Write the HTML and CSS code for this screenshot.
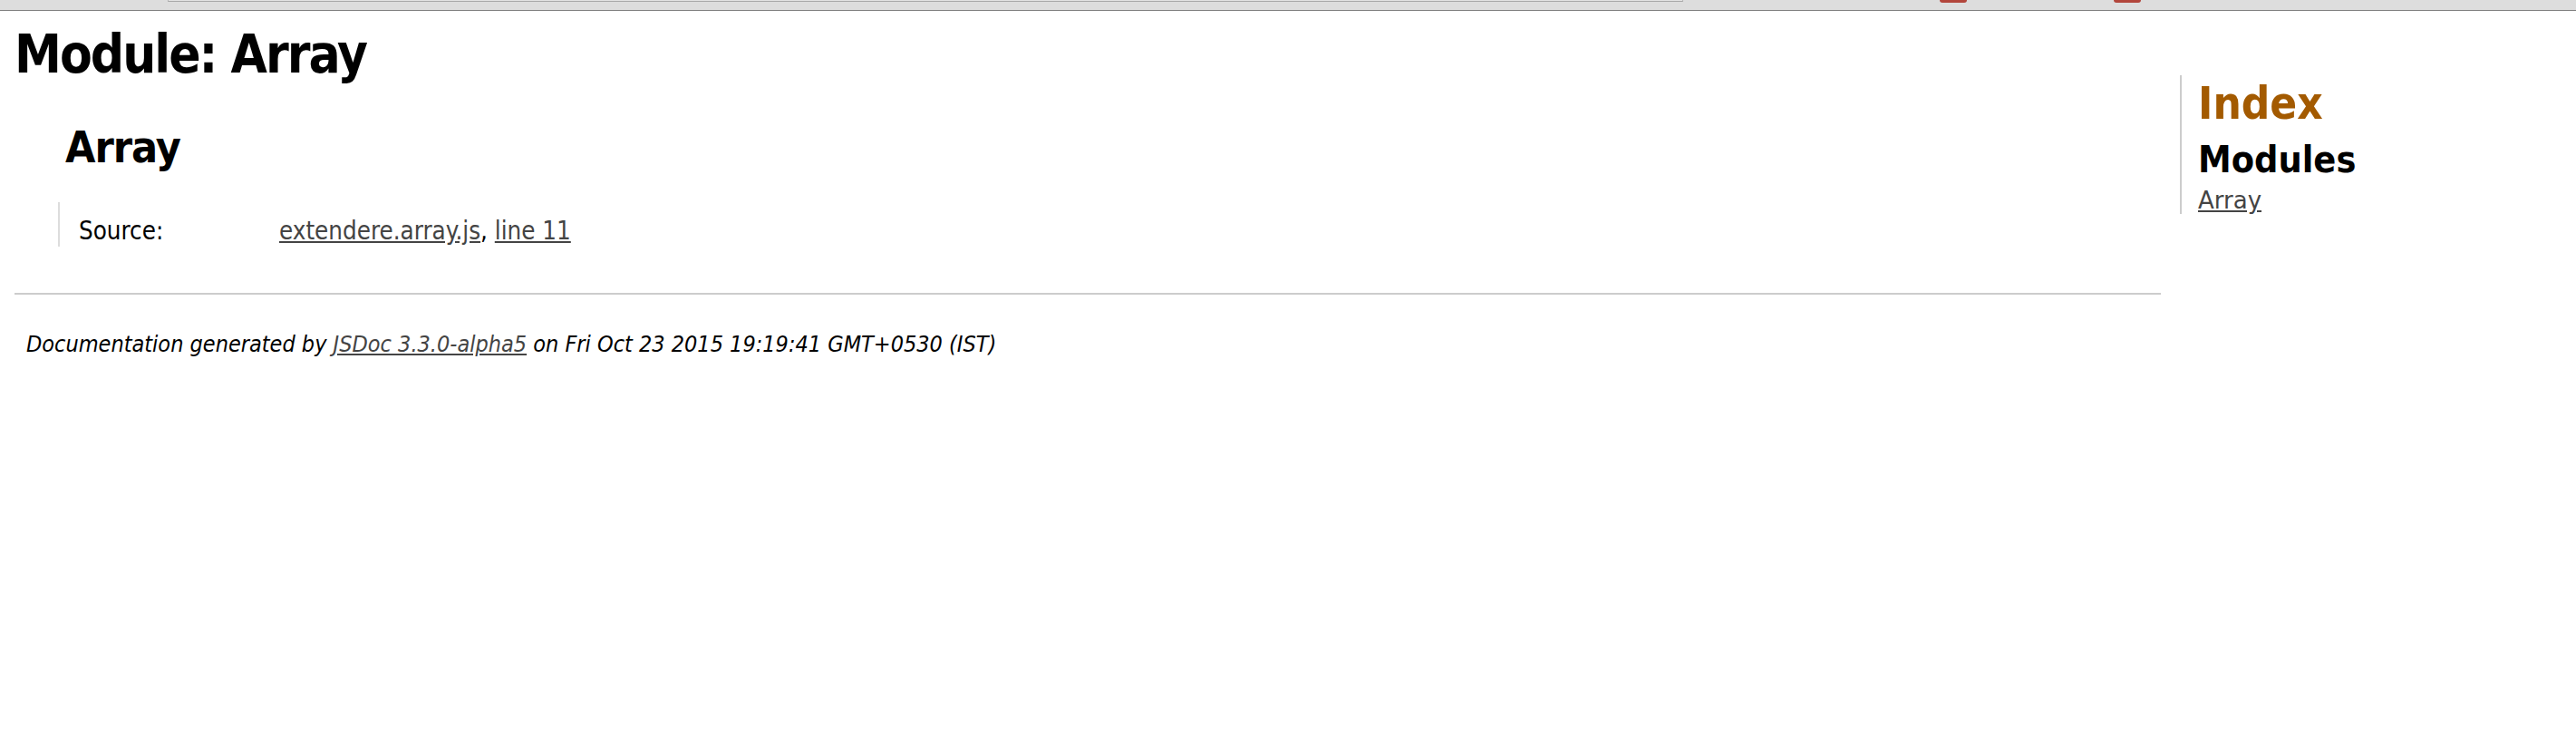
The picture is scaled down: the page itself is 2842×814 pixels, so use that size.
FILE: index.html
```html
<!DOCTYPE html>
<html lang="en">
<head>
<meta charset="utf-8">
<title>JSDoc: Module: Array</title>
<link rel="stylesheet" href="styles.css">
</head>
<body>
<div class="chrome">
  <div class="urlfield"></div>
  <div class="redtab tab1"></div>
  <div class="redtab tab2"></div>
</div>
<div class="page">
  <div class="main">
    <h1 class="page-title">Module: Array</h1>
    <h2 class="module-name">Array</h2>
    <dl class="details">
      <dt class="tag-source">Source:</dt>
      <dd class="tag-source"><a class="link" href="#">extendere.array.js</a>, <a class="link" href="#">line 11</a></dd>
    </dl>
    <hr class="rule">
    <footer class="footer">Documentation generated by <a class="link" href="#">JSDoc 3.3.0-alpha5</a> on Fri Oct 23 2015 19:19:41 GMT+0530 (IST)</footer>
  </div>
  <nav class="nav">
    <h2 class="nav-index"><a href="#">Index</a></h2>
    <h3 class="nav-heading">Modules</h3>
    <ul class="nav-list">
      <li><a class="link" href="#">Array</a></li>
    </ul>
  </nav>
</div>
</body>
</html>
```
FILE: styles.css
```css
html, body {
  margin: 0;
  padding: 0;
  background: #ffffff;
}
body {
  font-family: "DejaVu Sans Condensed", "DejaVu Sans", sans-serif;
  color: #000;
  font-size: 27.5px;
}
.chrome {
  height: 11px;
  background: #dddddd;
  border-bottom: 1px solid #7f7f7f;
  display: flex;
  position: relative;
}
.urlfield {
  margin-left: 185px;
  width: 1670px;
  height: 1px;
  background: #e3e3e3;
  border-left: 1px solid #b5b5b5;
  border-right: 1px solid #b5b5b5;
  border-bottom: 1px solid #a8a8a8;
}
.redtab {
  position: absolute;
  top: 0;
  width: 30px;
  height: 3px;
  background: #b2463c;
  border-radius: 0 0 4px 4px;
}
.tab1 { left: 2140px; }
.tab2 { left: 2332px; }

.page {
  display: flex;
  padding-left: 16px;
}
.main {
  flex: 0 0 2368px;
}
.page-title {
  margin: 16px 0 0 0;
  font-size: 58px;
  line-height: 64px;
  letter-spacing: -2px;
  font-weight: bold;
}
.module-name {
  margin: 42px 0 0 56px;
  font-size: 48px;
  line-height: 56px;
  letter-spacing: -1px;
  font-weight: bold;
}
.details {
  margin: 33px 0 0 48px;
  padding: 16px 0 3px 21px;
  border-left: 2px solid #dddddd;
  display: grid;
  grid-template-columns: 221px auto;
  line-height: 30px;
}
.details dt, .details dd {
  margin: 0;
}
.link, .link:visited {
  color: #444444;
  text-decoration: underline;
}
.rule {
  margin: 51px 0 0 0;
  border: 0;
  height: 2px;
  background: #cccccc;
}
.footer {
  display: block;
  margin-top: 40px;
  padding-left: 13px;
  font-style: italic;
  font-size: 25px;
  line-height: 30px;
}
.nav {
  margin: 71px 0 0 21px;
  padding-left: 18px;
  border-left: 2px solid #cccccc;
  width: 400px;
  align-self: flex-start;
}
.nav-index {
  margin: 6px 0 0 0;
  font-size: 49px;
  line-height: 52px;
  font-weight: bold;
}
.nav-index a {
  color: #a35a00;
  text-decoration: none;
}
.nav-heading {
  margin: 11px 0 0 0;
  font-size: 41px;
  line-height: 48px;
  font-weight: bold;
}
.nav-list {
  margin: 6px 0 0 0;
  padding: 0;
  list-style: none;
  font-family: "DejaVu Sans", sans-serif;
  font-size: 26px;
  line-height: 30px;
}
```
